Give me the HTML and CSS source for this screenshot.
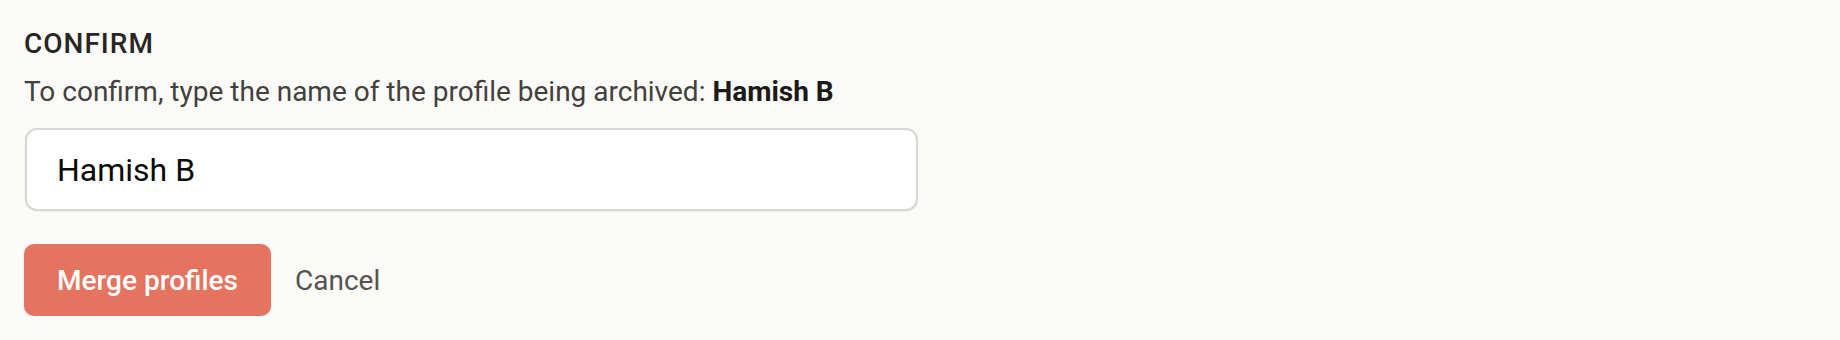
FILE: index.html
```html
<!DOCTYPE html>
<html lang="en">
<head>
  <meta charset="UTF-8">
  <title>Merge profiles</title>
  <link rel="stylesheet" href="styles.css">
</head>
<body>
  <form class="confirm">
    <h2 class="confirm-title">Confirm</h2>
    <p class="confirm-hint">To confirm, type the name of the profile being archived: <strong>Hamish B</strong></p>
    <input class="confirm-input" type="text" name="profileName" value="Hamish B">

    <div class="actions">
      <button type="submit" class="btn btn-danger">Merge profiles</button>
      <a href="#" class="btn-link">Cancel</a>
    </div>
  </form>
</body>
</html>
```

FILE: styles.css
```css
html, body {
  margin: 0;
  background: #fafaf8;
}
body {
  font-family: Roboto, "Liberation Sans", Arial, sans-serif;
  font-size: 28px;
  color: #44403c;
}
.confirm {
  display: flex;
  flex-direction: column;
  align-items: flex-start;
  padding: 24px 24px 0 24px;
}
.confirm-title {
  margin: 0;
  font-size: 28px;
  line-height: 40px;
  font-weight: 500;
  letter-spacing: 1px;
  text-transform: uppercase;
  color: #292524;
}
.confirm-hint {
  margin: 8px 0 0 0;
  line-height: 40px;
}
.confirm-hint strong {
  font-weight: 700;
  color: #1c1917;
}
.confirm-input {
  box-sizing: border-box;
  margin: 16px 0 0 1px;
  width: 893px;
  height: 83px;
  padding: 0 30px;
  border: 2px solid #d9d6d3;
  border-radius: 12px;
  background: #fff;
  box-shadow: 0 1px 2px rgba(0,0,0,.04);
  font-family: Roboto, "Liberation Sans", Arial, sans-serif;
  font-size: 32px;
  color: #0c0a09;
  outline: none;
}
.actions {
  display: flex;
  align-items: center;
  gap: 24px;
  margin-top: 33px;
}
.btn {
  box-sizing: border-box;
  height: 72px;
  padding: 0 33px;
  border: none;
  border-radius: 10px;
  font-family: Roboto, "Liberation Sans", Arial, sans-serif;
  font-size: 28px;
  font-weight: 500;
  cursor: pointer;
}
.btn-danger {
  background: #e4735f;
  color: #fff;
  box-shadow: 0 1px 3px rgba(0,0,0,.08);
}
.btn-link {
  color: #57534e;
  text-decoration: none;
}
```
